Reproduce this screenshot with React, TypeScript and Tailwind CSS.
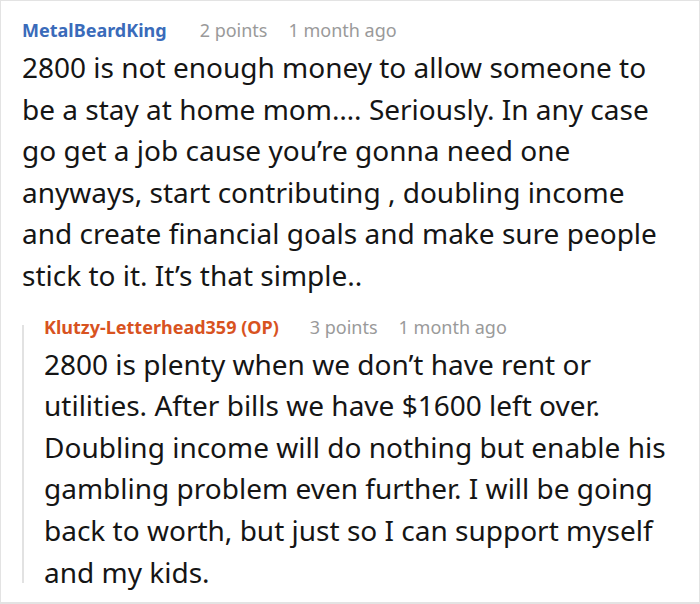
export default function App() {
  return (
    <div
      className="w-[700px] h-[604px] bg-white border border-b-2 border-[#e3e3e3] pl-[21px] pr-[28px] pt-[17px] overflow-hidden"
      style={{ fontFamily: '"Noto Sans", "Open Sans", sans-serif' }}
    >
      <div className="flex items-baseline text-[18px] leading-[24px] whitespace-nowrap">
        <span className="font-bold text-[#3a6bba]">MetalBeardKing</span>
        <span className="ml-[33px] text-[#9a9a9a]">2 points</span>
        <span className="ml-[21px] text-[#9a9a9a]">1 month ago</span>
      </div>
      <p className="mt-[5px] text-[28px] leading-[41.6px] text-[#151515]">
        2800 is not enough money to allow someone to be a stay at home mom…. Seriously. In any case go get a job cause you’re gonna need one anyways, start contributing , doubling income and create financial goals and make sure people stick to it. It’s that simple..
      </p>
      <div className="mt-[18px] flex">
        <div className="w-[2px] my-[10px] bg-[#e2e2e2] shrink-0" />
        <div className="ml-[20px]">
          <div className="flex items-baseline text-[18px] leading-[24px] whitespace-nowrap">
            <span className="font-bold text-[#d8531f]">Klutzy-Letterhead359 (OP)</span>
            <span className="ml-[31px] text-[#9a9a9a]">3 points</span>
            <span className="ml-[21px] text-[#9a9a9a]">1 month ago</span>
          </div>
          <p className="mt-[5px] text-[28px] leading-[41.6px] text-[#151515]">
            2800 is plenty when we don’t have rent or utilities. After bills we have $1600 left over. Doubling income will do nothing but enable his gambling problem even further. I will be going back to worth, but just so I can support myself and my kids.
          </p>
        </div>
      </div>
    </div>
  );
}
